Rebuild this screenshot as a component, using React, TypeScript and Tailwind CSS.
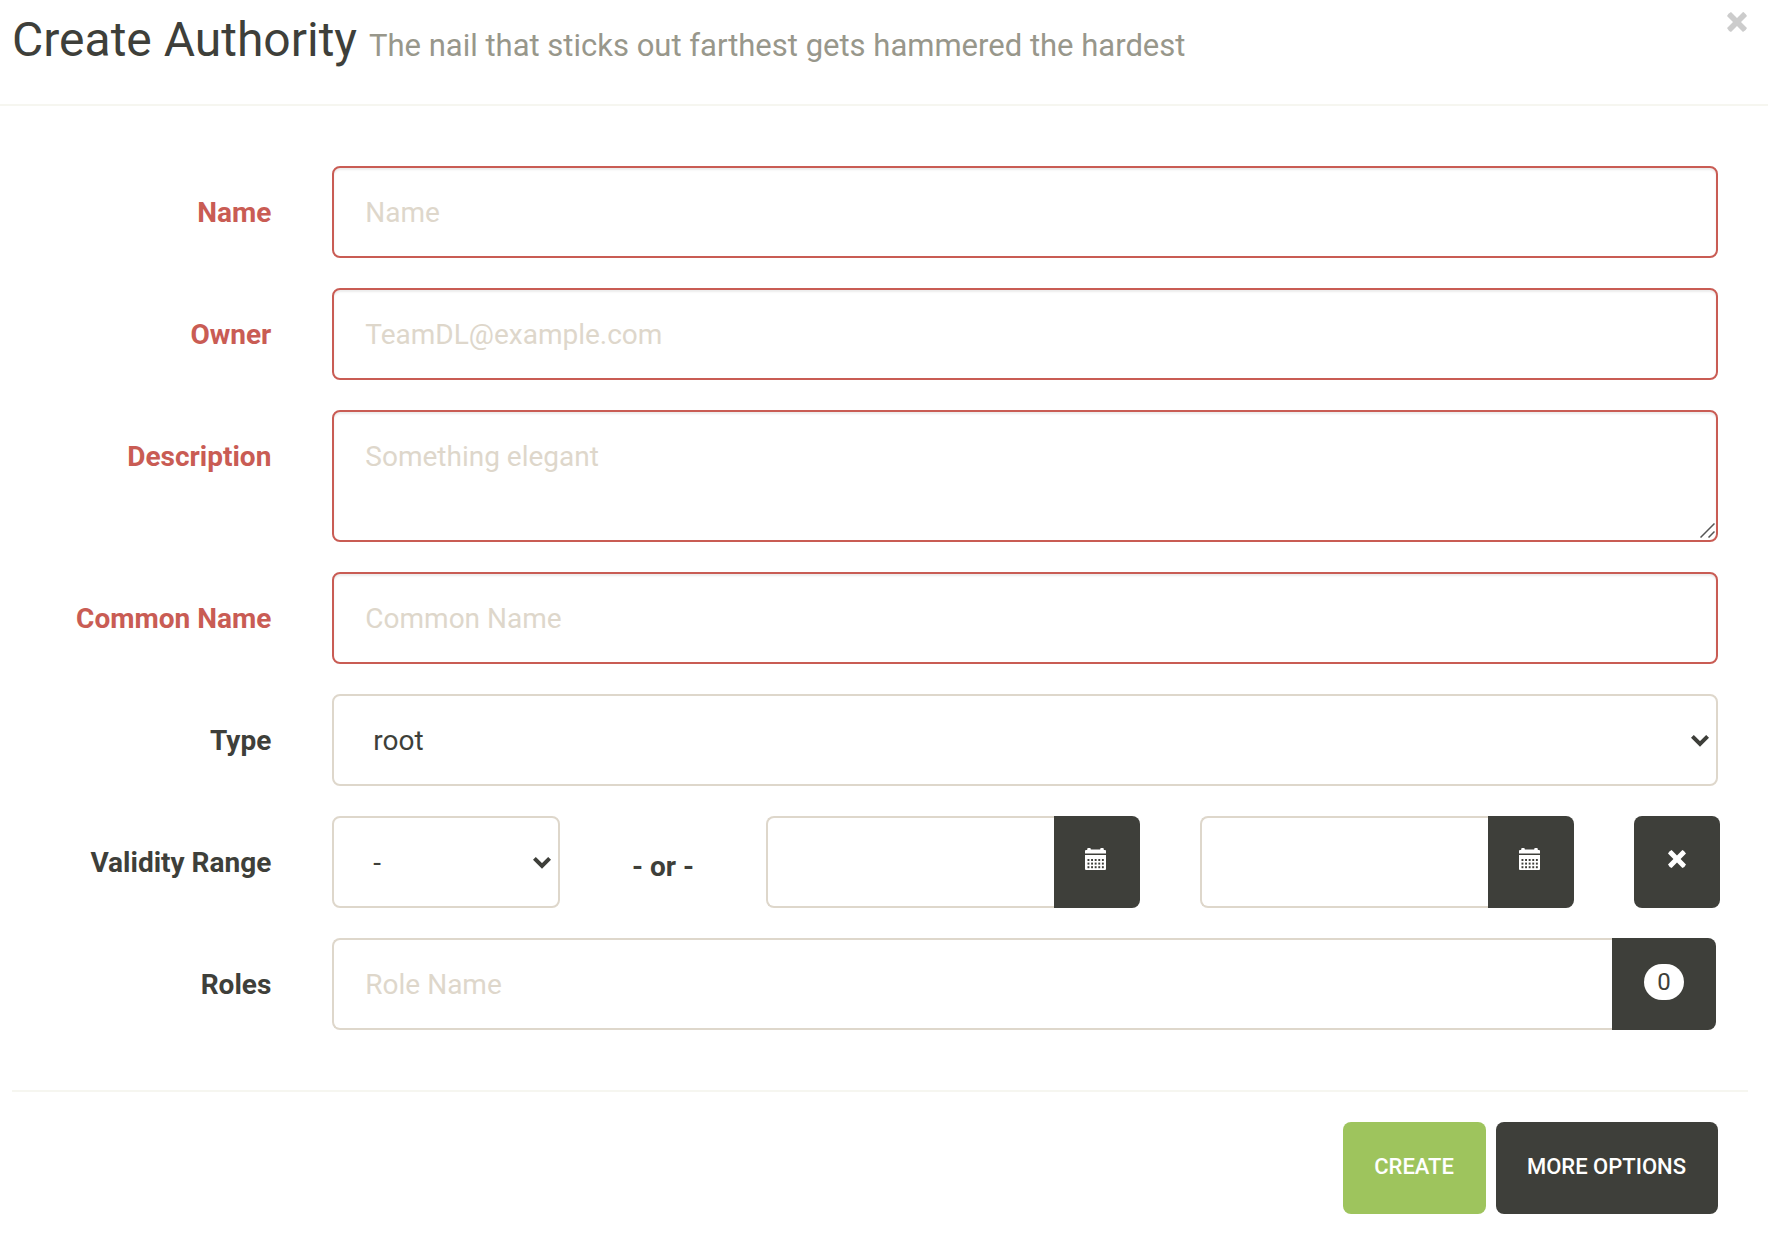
import type { ReactNode } from "react";

const fieldBase =
  "block w-full min-w-0 h-[92px] rounded-lg border-2 bg-white px-[31px] text-[28px] leading-10 text-[#3e3f3a] placeholder:text-[#ded7cb] placeholder:opacity-100 outline-none";
const fieldError = `${fieldBase} border-[#c95c54] shadow-[inset_0_2px_2px_rgba(0,0,0,0.075)]`;
const fieldNormal = `${fieldBase} border-[#ded7cb]`;

function Row({
  id,
  label,
  error,
  children,
}: {
  id: string;
  label: string;
  error?: boolean;
  children: ReactNode;
}) {
  return (
    <div className="grid grid-cols-12">
      <label
        htmlFor={id}
        className={
          error
            ? "col-span-2 whitespace-nowrap pt-[27px] pr-[30px] text-right text-[28px] leading-10 font-bold text-[#c95c54]"
            : "col-span-2 whitespace-nowrap pt-[27px] pr-[30px] text-right text-[28px] leading-10 font-bold text-[#3e3f3a]"
        }
      >
        {label}
      </label>
      {children}
    </div>
  );
}

function Select({ id, options, label }: { id: string; options: string[]; label?: string }) {
  return (
    <div className="relative">
      <select
        id={id}
        aria-label={label}
        className="block h-[92px] w-full appearance-none rounded-lg border-2 border-[#ded7cb] bg-white px-[39px] pt-0.5 text-[28px] leading-10 text-[#3e3f3a] outline-none"
      >
        {options.map((o) => (
          <option key={o}>{o}</option>
        ))}
      </select>
      <svg
        className="pointer-events-none absolute top-[41px] right-[9px]"
        width="18"
        height="12"
        viewBox="0 0 18 12"
        fill="none"
        aria-hidden="true"
      >
        <path d="M1.4 1.4 9 9l7.600-7.600" stroke="#3e3f3a" strokeWidth="4" />
      </svg>
    </div>
  );
}

function CalendarIcon() {
  const cols = [2.5, 6.1, 9.7, 13.3, 16.9];
  const rows = [11, 14.6, 18.2];
  return (
    <svg width="21" height="22" viewBox="0 0 21 22" aria-hidden="true">
      <path
        fill="#fff"
        d="M0 5.500V3q0-1 1-1h1.200V1q0-1 1-1h1.600q1 0 1 1v.5h9.400V1q0-1 1-1h1.600q1 0 1 1v1H20q1 0 1 1v2.500zM0 7h21v14q0 1-1 1H1q-1 0-1-1z"
      />
      {rows.map((y) =>
        cols.map((x) => <rect key={`${x}-${y}`} x={x} y={y} width="1.900" height="2" fill="#3e3f3a" />)
      )}
    </svg>
  );
}

function CrossIcon({ size, color }: { size: number; color: string }) {
  return (
    <svg width={size} height={size} viewBox="0 0 20 20" aria-hidden="true">
      <path
        fill={color}
        d="M4 0 10 6 16 0Q17.500.3 20 4L14 10 20 16Q19 18.500 16 20L10 14 4 20Q1.500 19 0 16L6 10 0 4Q1 1.500 4 0z"
      />
    </svg>
  );
}

function DateGroup({ id, label }: { id: string; label: string }) {
  return (
    <div className="col-span-3 flex pr-[29px] pl-[31px]">
      <input
        id={id}
        aria-label={label}
        type="text"
        className="block h-[92px] w-full min-w-0 flex-1 rounded-l-lg border-2 border-r-0 border-[#ded7cb] bg-white px-[31px] text-[28px] leading-10 text-[#3e3f3a] outline-none"
      />
      <button
        type="button"
        aria-label={`Pick ${label.toLowerCase()}`}
        className="flex h-[92px] w-[86px] shrink-0 items-center justify-center rounded-r-lg bg-[#3e3f3a] pr-1 pb-1.5"
      >
        <CalendarIcon />
      </button>
    </div>
  );
}

export default function App() {
  return (
    <div className="min-h-screen bg-white font-[Roboto,sans-serif] text-[#3e3f3a]">
      <header className="flex items-start justify-between border-b-2 border-[#f6f6f0] pr-[21px] pb-[38px] pl-3">
        <h3 className="pt-[13px] text-[48px] leading-[53px]">
          Create Authority{" "}
          <small className="text-[31px] leading-none text-[#98978b]">
            The nail that sticks out farthest gets hammered the hardest
          </small>
        </h3>
        <button type="button" aria-label="Close" className="mt-3">
          <CrossIcon size={20} color="#cccccc" />
        </button>
      </header>

      <form className="pr-5 pl-3" onSubmit={(e) => e.preventDefault()}>
        <div className="flex flex-col gap-[30px] py-[60px]">
          <Row id="name" label="Name" error>
            <div className="col-span-10 pr-[30px] pl-[31px]">
              <input id="name" type="text" placeholder="Name" className={fieldError} />
            </div>
          </Row>
          <Row id="owner" label="Owner" error>
            <div className="col-span-10 pr-[30px] pl-[31px]">
              <input id="owner" type="email" placeholder="TeamDL@example.com" className={fieldError} />
            </div>
          </Row>
          <Row id="description" label="Description" error>
            <div className="relative col-span-10 pr-[30px] pl-[31px]">
              <textarea
                id="description"
                placeholder="Something elegant"
                className="block h-[132px] w-full resize-none rounded-lg border-2 border-[#c95c54] bg-white px-[31px] py-[25px] text-[28px] leading-10 text-[#3e3f3a] shadow-[inset_0_2px_2px_rgba(0,0,0,0.075)] outline-none placeholder:text-[#ded7cb] placeholder:opacity-100"
              />
              <svg
                className="pointer-events-none absolute right-[33px] bottom-1"
                width="15"
                height="15"
                viewBox="0 0 15 15"
                fill="none"
                aria-hidden="true"
              >
                <path d="M.5 14.500l14-14M8.500 14.500l6-6" stroke="#555" strokeWidth="1.500" />
              </svg>
            </div>
          </Row>
          <Row id="commonName" label="Common Name" error>
            <div className="col-span-10 pr-[30px] pl-[31px]">
              <input id="commonName" type="text" placeholder="Common Name" className={fieldError} />
            </div>
          </Row>
          <Row id="type" label="Type">
            <div className="col-span-10 pr-[30px] pl-[31px]">
              <Select id="type" options={["root", "subca"]} />
            </div>
          </Row>
          <Row id="validity" label="Validity Range">
            <div className="col-span-2 px-[31px]">
              <Select id="validity" options={["-", "1 year", "2 years"]} />
            </div>
            <span className="pt-[31px] text-center text-[28px] leading-10 font-bold">- or -</span>
            <DateGroup id="validityStart" label="Start date" />
            <DateGroup id="validityEnd" label="End date" />
            <div className="pl-[31px]">
              <button
                type="button"
                aria-label="Clear dates"
                className="flex h-[92px] w-[86px] items-center justify-center rounded-lg bg-[#3e3f3a] pb-1.5"
              >
                <CrossIcon size={18} color="#ffffff" />
              </button>
            </div>
          </Row>
          <Row id="roles" label="Roles">
            <div className="col-span-10 flex pr-8 pl-[31px]">
              <input
                id="roles"
                type="text"
                placeholder="Role Name"
                className={`${fieldNormal} flex-1 rounded-r-none border-r-0`}
              />
              <button
                type="button"
                aria-label="Selected roles"
                className="flex h-[92px] w-[104px] shrink-0 items-center justify-center rounded-r-lg bg-[#3e3f3a] pb-1"
              >
                <span className="flex h-9 min-w-10 items-center justify-center rounded-full bg-white px-3 text-2xl text-[#3e3f3a]">
                  0
                </span>
              </button>
            </div>
          </Row>
        </div>

        <footer className="flex justify-end gap-2.5 border-t-2 border-[#f6f6f0] py-[30px] pr-[30px]">
          <button
            type="submit"
            className="h-[92px] rounded-lg bg-[#9ec45d] pr-8 pl-[31px] pb-0.5 text-[22px] leading-8 font-medium text-white"
          >
            CREATE
          </button>
          <button
            type="button"
            className="h-[92px] rounded-lg bg-[#3e3f3a] pr-8 pl-[31px] pb-0.5 text-[22px] leading-8 font-medium text-white"
          >
            MORE OPTIONS
          </button>
        </footer>
      </form>
    </div>
  );
}
